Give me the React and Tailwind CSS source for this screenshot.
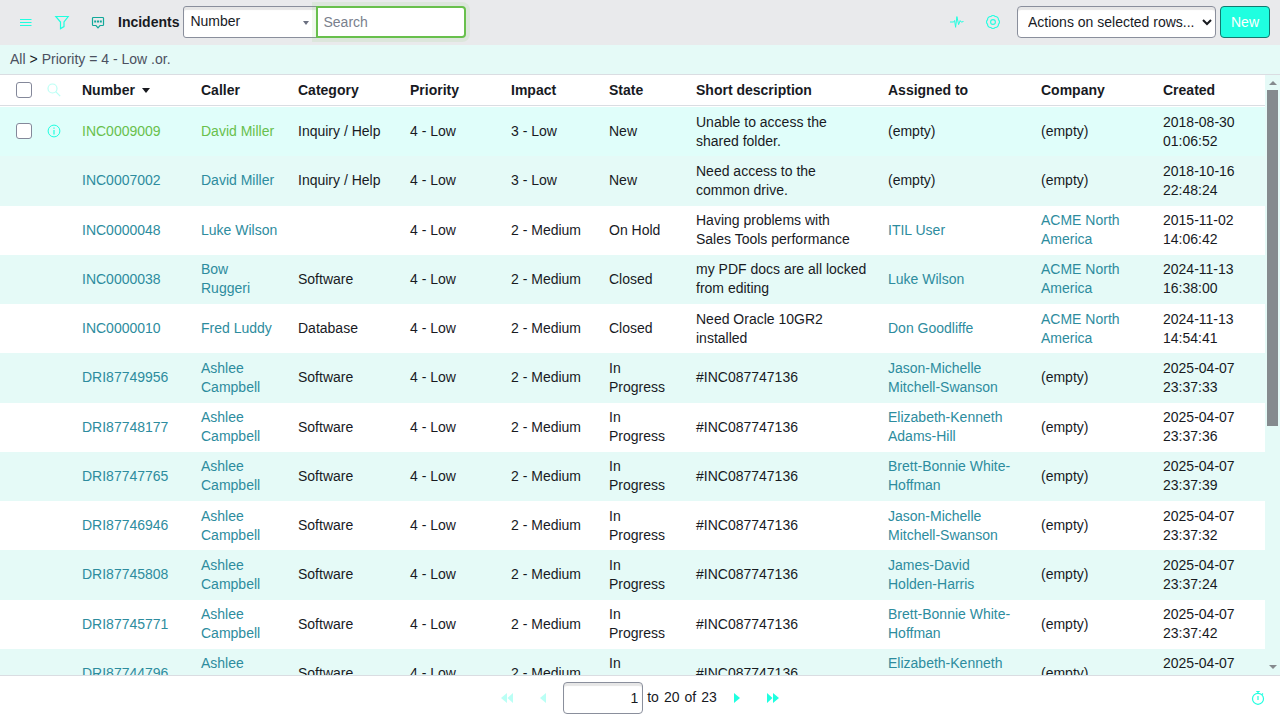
import React from 'react';

const COLUMNS = [
  { key: 'caller', label: 'Caller', width: 'w-[97px]', padding: 'pl-2 pr-3', link: true },
  { key: 'category', label: 'Category', width: 'w-[112px]', padding: 'px-2' },
  { key: 'priority', label: 'Priority', width: 'w-[101px]', padding: 'px-2' },
  { key: 'impact', label: 'Impact', width: 'w-[98px]', padding: 'px-2' },
  { key: 'state', label: 'State', width: 'w-[87px]', padding: 'px-2' },
  { key: 'description', label: 'Short description', width: '', padding: 'pl-2 pr-3' },
  { key: 'assigned', label: 'Assigned to', width: 'w-[153px]', padding: 'pl-2 pr-4', link: true },
  { key: 'company', label: 'Company', width: 'w-[122px]', padding: 'px-2', link: true },
  { key: 'created', label: 'Created', width: 'w-[110px]', padding: 'px-2' },
];

const incident = (number, caller, category, impact, state, description, assigned, company, created) => ({
  number, caller, category, priority: '4 - Low', impact, state, description, assigned, company, created,
});

const driven = (number, assigned, created) =>
  incident(number, 'Ashlee Campbell', 'Software', '2 - Medium', 'In Progress', '#INC087747136', assigned, '(empty)', created);

const ROWS = [
  incident('INC0009009', 'David Miller', 'Inquiry / Help', '3 - Low', 'New', 'Unable to access the shared folder.', '(empty)', '(empty)', '2018-08-30 01:06:52'),
  incident('INC0007002', 'David Miller', 'Inquiry / Help', '3 - Low', 'New', 'Need access to the common drive.', '(empty)', '(empty)', '2018-10-16 22:48:24'),
  incident('INC0000048', 'Luke Wilson', '', '2 - Medium', 'On Hold', 'Having problems with Sales Tools performance', 'ITIL User', 'ACME North America', '2015-11-02 14:06:42'),
  incident('INC0000038', 'Bow Ruggeri', 'Software', '2 - Medium', 'Closed', 'my PDF docs are all locked from editing', 'Luke Wilson', 'ACME North America', '2024-11-13 16:38:00'),
  incident('INC0000010', 'Fred Luddy', 'Database', '2 - Medium', 'Closed', 'Need Oracle 10GR2 installed', 'Don Goodliffe', 'ACME North America', '2024-11-13 14:54:41'),
  driven('DRI87749956', 'Jason-Michelle Mitchell-Swanson', '2025-04-07 23:37:33'),
  driven('DRI87748177', 'Elizabeth-Kenneth Adams-Hill', '2025-04-07 23:37:36'),
  driven('DRI87747765', 'Brett-Bonnie White-Hoffman', '2025-04-07 23:37:39'),
  driven('DRI87746946', 'Jason-Michelle Mitchell-Swanson', '2025-04-07 23:37:32'),
  driven('DRI87745808', 'James-David Holden-Harris', '2025-04-07 23:37:24'),
  driven('DRI87745771', 'Brett-Bonnie White-Hoffman', '2025-04-07 23:37:42'),
  driven('DRI87744796', 'Elizabeth-Kenneth Adams-Hill', '2025-04-07 23:37:35'),
];

const FIELD = 'h-8 border border-[#8a8f9c] bg-white shadow-[inset_0_3px_1px_#e6e6e6] outline-none';

function IconButton({ label, disabled, className = 'size-9', children }) {
  return (
    <button type="button" aria-label={label} disabled={disabled} className={`flex shrink-0 items-center justify-center text-[#1fffe0] disabled:opacity-30 ${className}`}>
      {children}
    </button>
  );
}

function Icon({ className = '', children }) {
  return (
    <svg viewBox="0 0 16 16" className={`size-4 ${className}`} fill="none" stroke="currentColor" strokeWidth="1.2" aria-hidden="true">
      {children}
    </svg>
  );
}

function Checkbox({ label }) {
  return (
    <input type="checkbox" aria-label={label} className="block size-4 appearance-none rounded-[3px] border border-[#84889a] bg-white checked:bg-[#1fffe0]" />
  );
}

function Toolbar() {
  return (
    <header className="flex h-[45px] shrink-0 items-center bg-[#e9eaec] pl-2 pr-[10px] pb-px">
      <IconButton label="List menu">
        <Icon><path d="M2 5.500h11.500M2 8.500h11.500M2 11.500h11.500" strokeWidth="1" /></Icon>
      </IconButton>
      <IconButton label="Filter">
        <Icon><path d="M1.800 2.500h12.400L10 8v4.600l-3.500 2V8z" /></Icon>
      </IconButton>
      <IconButton label="Activity stream">
        <Icon className="text-[#12a89a]">
          <path d="M3.300 3.500h9.400q.8 0 .8.800v6.400q0 .8-.8.800H10l-2 2.300-2-2.300H3.300q-.8 0-.8-.8V4.300q0-.8.8-.8z" />
          <path d="M4.200 7.500h2M7 7.500h2M9.800 7.500h2" strokeWidth="2" />
        </Icon>
      </IconButton>
      <h1 className="ml-0.5 mr-1 font-bold">Incidents</h1>
      <div className="relative w-[134px] shrink-0">
        <select aria-label="Search field" className={`${FIELD} w-full appearance-none rounded-l-[3px] pb-0.5 pl-1.5`}>
          <option>Number</option>
        </select>
        <svg viewBox="0 0 6 4" className="pointer-events-none absolute right-2 top-[15px] h-1 w-1.5" fill="#6b7080" aria-hidden="true"><path d="M0 0h6L3 4z" /></svg>
      </div>
      <input type="search" aria-label="Search" placeholder="Search" className="relative -ml-px h-8 w-[150px] shrink-0 rounded-r-[4px] border-2 border-[#68c04c] bg-white px-[5px] shadow-[0_0_0_4px_rgba(104,192,76,0.1)] outline-none placeholder:text-[#7a7f8d]" />
      <div className="ml-auto flex items-center">
        <IconButton label="Response time">
          <Icon><path d="M1 8h3.700l.9-1.500 1 6.800L7.900 2.600l1.700 8 1.600-4 1.100 1.500 2.200-.6" strokeWidth="1" /></Icon>
        </IconButton>
        <IconButton label="Settings">
          <Icon>
            <path d="M5.740 2.550a3 3 0 0 1 4.520 0a3 3 0 0 1 3.190 3.190a3 3 0 0 1 0 4.520a3 3 0 0 1-3.190 3.190a3 3 0 0 1-4.520 0a3 3 0 0 1-3.190-3.190a3 3 0 0 1 0-4.520a3 3 0 0 1 3.190-3.190z" strokeWidth="1.100" />
            <circle cx="8" cy="8" r="2.400" strokeWidth="1.100" />
          </Icon>
        </IconButton>
        <select aria-label="Actions on selected rows" className={`${FIELD} ml-1.5 w-[199px] rounded-[4px] pl-1.5`}>
          <option>Actions on selected rows...</option>
        </select>
        <button type="button" className="ml-1 h-8 rounded-[4px] border border-[#127a70] bg-[#1fffe0] px-[10px] text-white">New</button>
      </div>
    </header>
  );
}

function IncidentTable() {
  return (
    <table className="h-[623px] w-full table-fixed border-separate border-spacing-0 text-left leading-[19px]">
      <thead>
        <tr className="*:h-8 *:border-b *:border-white *:p-0 *:shadow-[inset_0_-1px_0_#dadde2]">
          <th className="w-[46px]"><div className="pb-px pl-4"><Checkbox label="Select all" /></div></th>
          <th className="w-7">
            <div className="pb-px">
              <IconButton label="Show column search" disabled className="size-4">
                <Icon><circle cx="6.500" cy="6.500" r="4.500" /><path d="M9.700 9.700l4.500 4.500" /></Icon>
              </IconButton>
            </div>
          </th>
          <th className="w-[119px]">
            <div className="flex items-center gap-[7px] pl-2">
              <a href="#number">Number</a>
              <svg viewBox="0 0 8 5" className="h-[5px] w-2" fill="currentColor" aria-hidden="true"><path d="M0 0h8L4 5z" /></svg>
            </div>
          </th>
          {COLUMNS.map((column) => (
            <th key={column.key} className={column.width}><a href={`#${column.key}`} className="pl-2">{column.label}</a></th>
          ))}
        </tr>
      </thead>
      <tbody>
        {ROWS.map((row, index) => {
          const active = index === 0;
          const background = active ? 'bg-[#e0fefa]' : index % 2 ? 'bg-[#e5faf7]' : 'bg-white';
          const linkColor = active ? 'text-[#68c04c]' : 'text-[#2d8c9e]';
          return (
            <tr key={row.number} className={background}>
              <td className="p-0">{active && <div className="pb-px pl-4"><Checkbox label={`Select ${row.number}`} /></div>}</td>
              <td className="p-0">
                {active && (
                  <div className="pb-px">
                    <IconButton label={`Preview ${row.number}`} className="size-4">
                      <Icon><circle cx="8" cy="8" r="5.900" strokeWidth="1" /><path d="M8 7v4.500M8 4.500v1.300" /></Icon>
                    </IconButton>
                  </div>
                )}
              </td>
              <td className="px-2 py-0"><a href={`#${row.number}`} className={linkColor}>{row.number}</a></td>
              {COLUMNS.map(({ key, link, padding }) => (
                <td key={key} className={`py-0 ${padding}`}>
                  {link && row[key] !== '(empty)' ? <a href={`#${key}`} className={linkColor}>{row[key]}</a> : row[key]}
                </td>
              ))}
            </tr>
          );
        })}
      </tbody>
    </table>
  );
}

function Scrollbar() {
  return (
    <div aria-hidden="true" className="flex w-[15px] shrink-0 flex-col items-center bg-[#e5faf7] text-[#858a8e]">
      <svg viewBox="0 0 8 4" className="mb-[5px] mt-1.5 h-1 w-2 shrink-0" fill="currentColor"><path d="M4 0l4 4H0z" /></svg>
      <div className="flex w-full flex-1 justify-center"><div className="h-[59%] w-[11px] bg-current" /></div>
      <svg viewBox="0 0 8 4" className="mb-1.5 mt-1.5 h-1 w-2 shrink-0" fill="currentColor"><path d="M0 0h8L4 4z" /></svg>
    </div>
  );
}

function Pagination() {
  return (
    <footer className="grid h-[43px] shrink-0 grid-cols-[1fr_auto_1fr] items-center border-t border-[#dadde2] bg-white px-1">
      <div className="col-start-2 flex items-center pt-0.5">
        <IconButton label="First page" disabled><Icon><path d="M8 3v10L2 8zM14 3v10L8.500 8z" fill="currentColor" stroke="none" /></Icon></IconButton>
        <IconButton label="Previous page" disabled><Icon><path d="M11 3v10L5 8z" fill="currentColor" stroke="none" /></Icon></IconButton>
        <input type="text" aria-label="Skip to row" defaultValue="1" className={`${FIELD} ml-0.5 w-20 rounded-[4px] px-1 text-right`} />
        <p className="ml-1 flex gap-[5px] pb-0.5"><span>to</span><span>20</span><span>of</span><span>23</span></p>
        <IconButton label="Next page" className="ml-0.5 size-9"><Icon><path d="M5 3v10l6-5z" fill="currentColor" stroke="none" /></Icon></IconButton>
        <IconButton label="Last page"><Icon><path d="M2 3v10l5.500-5zM8 3v10l6-5z" fill="currentColor" stroke="none" /></Icon></IconButton>
      </div>
      <IconButton label="Response time details" className="size-9 justify-self-end pt-0.5">
        <Icon><circle cx="8" cy="8.800" r="5.500" /><path d="M8 3.300V1.500M6.300 1.500h3.400M12 4.500l1-1M8 6v4" /></Icon>
      </IconButton>
    </footer>
  );
}

export default function App() {
  return (
    <div className="mr-2 flex h-screen flex-col bg-white font-['Liberation_Sans',Arial,sans-serif] text-[14px] leading-[19px] text-[#181a1f]">
      <Toolbar />
      <nav aria-label="Filter conditions" className="flex h-[30px] shrink-0 items-center gap-1 border-b border-[#dadde2] bg-[#e5faf7] px-[10px]">
        <a href="#all" className="text-[#4b5060]">All</a>
        <span>&gt;</span>
        <a href="#priority" className="text-[#4b5060]">Priority = 4 - Low .or.</a>
      </nav>
      <main className="flex min-h-0 flex-1">
        <div className="min-w-0 flex-1 overflow-hidden"><IncidentTable /></div>
        <Scrollbar />
      </main>
      <Pagination />
    </div>
  );
}
